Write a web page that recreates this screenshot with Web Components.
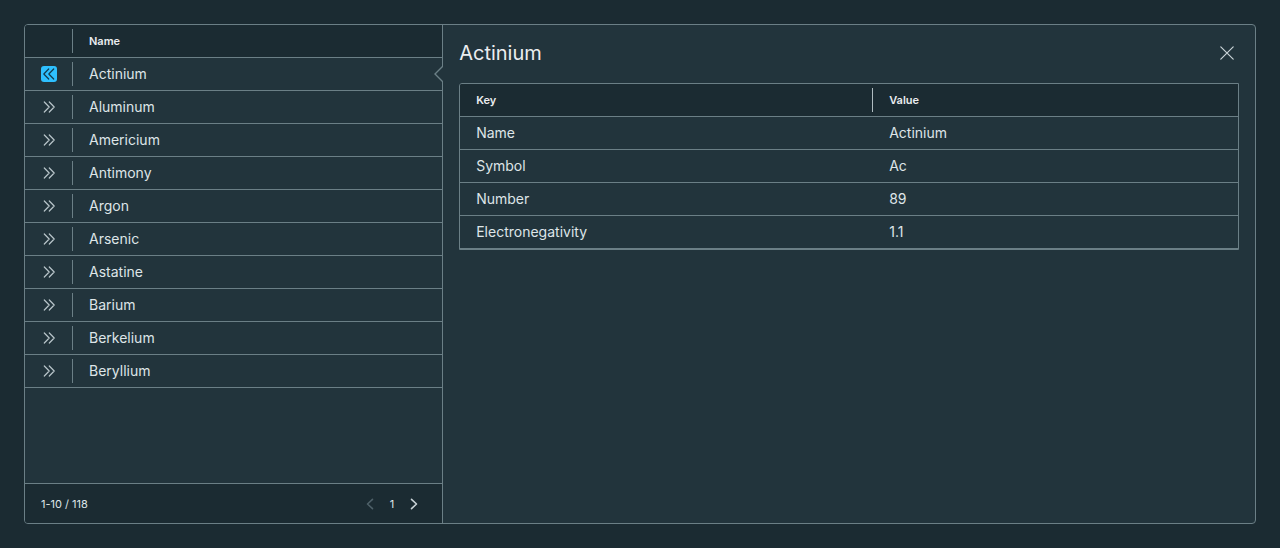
<!DOCTYPE html>
<html lang="en">
<head>
<meta charset="utf-8">
<title>Elements</title>
<style>
  :root {
    --page: #1b2b32;
    --panel: #22343c;
    --line: #6b7f86;
    --text: #dee5e8;
    --strong: #eaedf0;
    --accent: #2ec0ff;
  }
  body {
    margin: 0;
    padding: 24px;
    box-sizing: border-box;
    min-height: 100vh;
    display: flex;
    background: var(--page);
    color: var(--text);
    font: 14px/24px Inter, "Liberation Sans", sans-serif;
  }
</style>
</head>
<body>
<data-grid>
  <element-list></element-list>
  <grid-pager slot="footer" range="1-10 / 118" page="1"></grid-pager>
  <detail-pane slot="detail" heading="Actinium">
    <property-table></property-table>
  </detail-pane>
</data-grid>

<script>
const mount = (host, html) => {
  host.attachShadow({ mode: "open" }).innerHTML = html;
};

const PATHS = {
  expand: "M3.300 3 8.200 8 3.300 13M8.300 3 13.200 8 8.300 13",
  collapse: "M12.700 3 7.800 8 12.700 13M7.700 3 2.800 8 7.700 13",
  previous: "M10.500 3.300 5.500 8 10.500 12.700",
  next: "M5.500 3.300 10.500 8 5.500 12.700",
  close: "M1.800 1.800 14.200 14.200M14.200 1.800 1.800 14.200"
};

customElements.define("line-icon", class extends HTMLElement {
  connectedCallback() {
    mount(this, `
      <style>
        :host { display: block; width: 16px; height: 16px; }
        svg { display: block; width: 100%; height: 100%; fill: none; stroke: currentColor;
              stroke-width: var(--stroke, 1.2); stroke-linecap: round; stroke-linejoin: round; }
      </style>
      <svg viewBox="0 0 16 16" aria-hidden="true"><path d="${PATHS[this.getAttribute("name")]}"/></svg>`);
  }
});

customElements.define("data-grid", class extends HTMLElement {
  connectedCallback() {
    mount(this, `
      <style>
        :host { flex: 1; display: grid; grid-template-columns: 34% 1fr; box-sizing: border-box;
                border: 1px solid var(--line); border-radius: 4px; background: var(--panel); }
        .master { display: flex; flex-direction: column; border-right: 1px solid var(--line);
                  border-radius: 3px 0 0 3px; }
        .rows { flex: 1; }
      </style>
      <section class="master">
        <div class="rows"><slot></slot></div>
        <slot name="footer"></slot>
      </section>
      <slot name="detail"></slot>`);
  }
});

customElements.define("element-list", class extends HTMLElement {
  connectedCallback() {
    const names = ["Actinium", "Aluminum", "Americium", "Antimony", "Argon",
                   "Arsenic", "Astatine", "Barium", "Berkelium", "Beryllium"];
    const rows = names.map((name, i) => `
      <tr>
        <td class="toggle"><button type="button" aria-label="Details of ${name}" aria-expanded="${i === 0}">
          <line-icon name="${i === 0 ? "collapse" : "expand"}"></line-icon></button></td>
        <td class="name">${name}${i === 0 ? `<svg class="caret" viewBox="0 0 9 16" aria-hidden="true"><path d="M9 0 1 8 9 16"/></svg>` : ""}</td>
      </tr>`).join("");
    mount(this, `
      <style>
        :host { display: block; }
        table { width: 100%; border-collapse: separate; border-spacing: 0; table-layout: fixed; }
        th, td { height: 32px; padding: 0; border-bottom: 1px solid var(--line); text-align: left; }
        th { background: var(--page); color: var(--strong); font-size: 11px; font-weight: 600; }
        th:first-child { border-top-left-radius: 3px; }
        .toggle { width: 48px;
                  background-image: linear-gradient(var(--line), var(--line));
                  background-size: 1px 24px; background-position: right center; background-repeat: no-repeat; }
        .name { padding: 0 16px; position: relative; }
        button { display: block; margin: 0 16px; padding: 0; border: 0; border-radius: 3px;
                 background: none; color: #b9c5ca; cursor: pointer; }
        button[aria-expanded="true"] { background: var(--accent); color: #14394b; }
        .caret { position: absolute; right: -1px; top: 8px; width: 9px; height: 16px;
                 fill: var(--panel); stroke: var(--line); stroke-width: 1.4; }
      </style>
      <table>
        <thead><tr><th class="toggle"></th><th class="name">Name</th></tr></thead>
        <tbody>${rows}</tbody>
      </table>`);
  }
});

customElements.define("grid-pager", class extends HTMLElement {
  connectedCallback() {
    mount(this, `
      <style>
        :host { display: flex; align-items: center; justify-content: space-between; height: 39px;
                padding: 0 20px 0 16px; border-top: 1px solid var(--line); background: var(--page);
                border-bottom-left-radius: 3px; font-size: 11px; }
        nav { display: flex; align-items: center; gap: 12px; --stroke: 1.6; }
        button { padding: 0; border: 0; background: none; color: #c9d3d7; cursor: pointer; }
        button:disabled { color: #4e6068; cursor: default; }
      </style>
      <span>${this.getAttribute("range")}</span>
      <nav aria-label="Pages">
        <button type="button" aria-label="Previous page" disabled><line-icon name="previous"></line-icon></button>
        <span>${this.getAttribute("page")}</span>
        <button type="button" aria-label="Next page"><line-icon name="next"></line-icon></button>
      </nav>`);
  }
});

customElements.define("detail-pane", class extends HTMLElement {
  connectedCallback() {
    mount(this, `
      <style>
        :host { display: block; padding: 16px; min-width: 0; }
        header { display: flex; align-items: center; justify-content: space-between;
                 margin-bottom: 18px; padding-right: 4px; }
        h2 { margin: 0; font-size: 20px; line-height: 24px; font-weight: 400; color: var(--strong); }
        button { padding: 0; border: 0; background: none; color: #c9d3d7; cursor: pointer; }
      </style>
      <header>
        <h2>${this.getAttribute("heading")}</h2>
        <button type="button" aria-label="Close"><line-icon name="close"></line-icon></button>
      </header>
      <slot></slot>`);
  }
});

customElements.define("property-table", class extends HTMLElement {
  connectedCallback() {
    const rows = [["Name", "Actinium"], ["Symbol", "Ac"], ["Number", "89"], ["Electronegativity", "1.1"]]
      .map(([key, value]) => `<tr><td>${key}</td><td>${value}</td></tr>`).join("");
    mount(this, `
      <style>
        :host { display: block; border: 1px solid var(--line); border-radius: 3px 0 0 0; }
        table { width: 100%; border-collapse: separate; border-spacing: 0; table-layout: fixed; }
        col:first-child { width: 53.1%; }
        th, td { height: 32px; padding: 0 16px; border-bottom: 1px solid var(--line); text-align: left; }
        th { background: var(--page); color: var(--strong); font-size: 11px; font-weight: 600; }
        th:first-child { border-top-left-radius: 2px;
                         background-image: linear-gradient(#b0bcc1, #b0bcc1);
                         background-size: 1px 24px; background-position: right center; background-repeat: no-repeat; }
      </style>
      <table>
        <colgroup><col><col></colgroup>
        <thead><tr><th>Key</th><th>Value</th></tr></thead>
        <tbody>${rows}</tbody>
      </table>`);
  }
});
</script>
</body>
</html>
